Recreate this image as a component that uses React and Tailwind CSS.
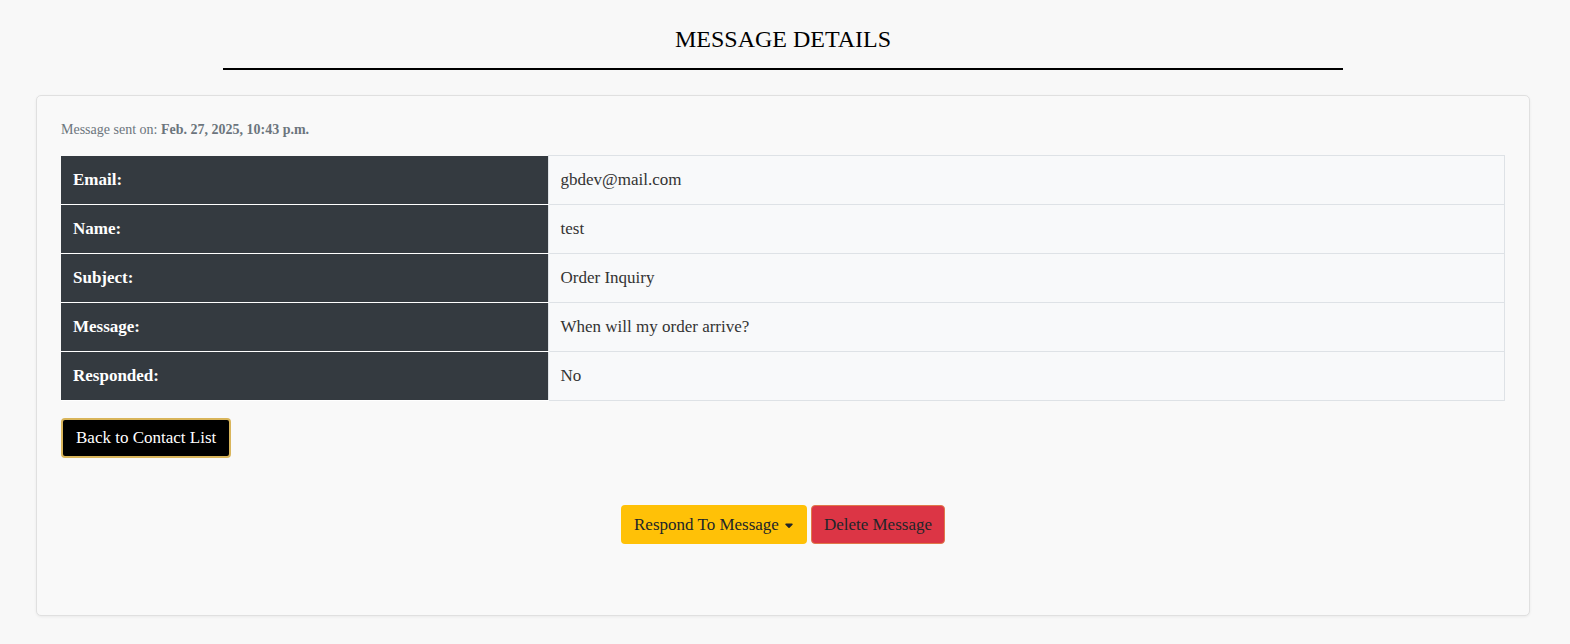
import React from 'react';

const rows = [
  { label: 'Email:', value: 'gbdev@mail.com' },
  { label: 'Name:', value: 'test' },
  { label: 'Subject:', value: 'Order Inquiry' },
  { label: 'Message:', value: 'When will my order arrive?' },
  { label: 'Responded:', value: 'No' },
];

const App = () => {
  return (
    <div className="min-h-[644px] bg-[#f8f8f8] font-['Liberation_Serif',serif] text-[#212529] pr-[4px]">
      {/* Header */}
      <div className="pt-[22px] flex flex-col items-center">
        <h1 className="text-[24px] leading-[34px] text-black">MESSAGE DETAILS</h1>
        <div className="mt-[12px] w-[1120px] h-[2px] bg-black"></div>
      </div>

      {/* Card */}
      <div className="ml-[36px] mr-[36px] mt-[25px] h-[521px] bg-[#f9f9f9] border border-[#e0e0e0] rounded-[5px] shadow-[0_1px_3px_rgba(0,0,0,0.06)] px-[24px] pt-[24px]">
        <p className="text-[14px] leading-[20px] text-[#6c757d]">
          Message sent on: <strong>Feb. 27, 2025, 10:43 p.m.</strong>
        </p>

        <table className="mt-[15px] w-full border-collapse">
          <tbody>
            {rows.map((row) => (
              <tr key={row.label} className="h-[49px]">
                <th className="w-[487px] bg-[#343a40] text-white text-left font-bold text-[17px] px-[12px] border-b border-white">
                  {row.label}
                </th>
                <td className="bg-[#f8f9fa] text-[17px] px-[12px] border border-[#dee2e6] text-[#333]">
                  {row.value}
                </td>
              </tr>
            ))}
          </tbody>
        </table>

        <button className="mt-[17px] h-[40px] px-[13px] bg-black text-white text-[17px] border-2 border-[#d9b55b] rounded-[4px]">
          Back to Contact List
        </button>

        {/* Actions */}
        <div className="mt-[47px] flex justify-center gap-[4px]">
          <button className="h-[39px] px-[13px] bg-[#ffc107] text-[#212529] text-[17px] rounded-[4px] flex items-center gap-[5px]">
            Respond To Message
            <svg width="10" height="12" viewBox="0 0 320 512" fill="currentColor">
              <path d="M137.4 374.6c12.5 12.5 32.8 12.5 45.3 0l128-128c9.2-9.2 11.9-22.9 6.9-34.9S301 192 288 192H32c-12.9 0-24.6 7.8-29.6 19.8s-2.2 25.7 6.9 34.9l128 128z" />
            </svg>
          </button>
          <button className="h-[39px] px-[12px] bg-[#dc3545] text-[#212529] text-[17px] rounded-[4px] border border-[#e0794a]">
            Delete Message
          </button>
        </div>
      </div>
    </div>
  );
};

export default App;
